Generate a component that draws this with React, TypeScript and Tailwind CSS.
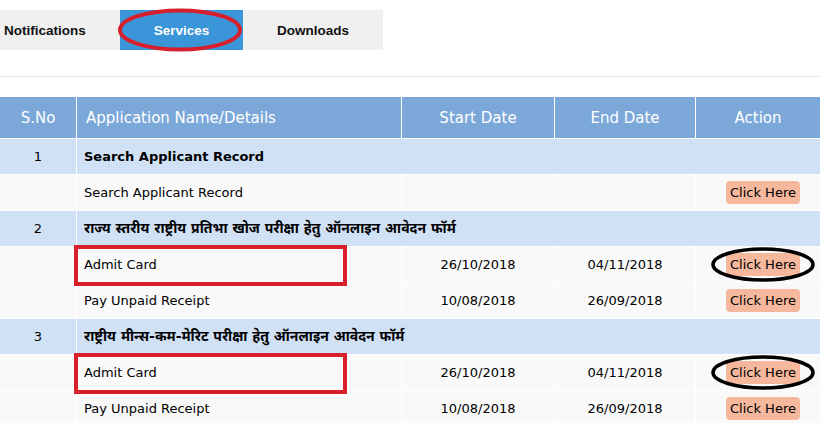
import React from 'react'

type Row =
  | { kind: 'group'; no: string; title: string; hindi?: boolean }
  | { kind: 'item'; name: string; start?: string; end?: string; mark?: boolean }

const rows: Row[] = [
  { kind: 'group', no: '1', title: 'Search Applicant Record' },
  { kind: 'item', name: 'Search Applicant Record' },
  { kind: 'group', no: '2', title: 'राज्य स्तरीय राष्ट्रीय प्रतिभा खोज परीक्षा हेतु ऑनलाइन आवेदन फॉर्म', hindi: true },
  { kind: 'item', name: 'Admit Card', start: '26/10/2018', end: '04/11/2018', mark: true },
  { kind: 'item', name: 'Pay Unpaid Receipt', start: '10/08/2018', end: '26/09/2018' },
  { kind: 'group', no: '3', title: 'राष्ट्रीय मीन्स-कम-मेरिट परीक्षा हेतु ऑनलाइन आवेदन फॉर्म', hindi: true },
  { kind: 'item', name: 'Admit Card', start: '26/10/2018', end: '04/11/2018', mark: true },
  { kind: 'item', name: 'Pay Unpaid Receipt', start: '10/08/2018', end: '26/09/2018' },
]

const cols = 'grid grid-cols-[77px_325px_153px_141px_124px]'

function ClickHere({ mark }: { mark?: boolean }) {
  return (
    <div className="relative ml-[10px]">
      <button className="bg-[#f5b89d] rounded-[4px] px-[4px] h-[23px] text-[13px] leading-[23px] text-black">
        Click Here
      </button>
      {mark && (
        <svg className="absolute left-[-16px] top-[-7px] w-[106px] h-[37px] pointer-events-none" viewBox="0 0 106 37">
          <ellipse cx="53" cy="18.5" rx="50" ry="15.5" fill="none" stroke="#000" strokeWidth="3.5" />
        </svg>
      )}
    </div>
  )
}

export default function App() {
  return (
    <div className="w-[820px] h-[423px] overflow-hidden bg-white font-['DejaVu_Sans',Verdana,'Noto_Sans',sans-serif]">
      {/* Tabs */}
      <div className="pt-[10px] h-[77px] border-b border-[#e8e8e8]">
        <div className="flex w-[383px] h-[40px] bg-[#f0f0f0] font-['Liberation_Sans',Arial,sans-serif] font-bold text-[13.5px]">
          <div className="w-[120px] flex items-center pt-[2px] pl-[4px] text-[#111]">Notifications</div>
          <div className="relative w-[123px] flex items-center justify-center pt-[2px] bg-[#3a95d9] text-white">
            Services
            <svg className="absolute left-[-3px] top-[-2px] w-[128px] h-[44px] pointer-events-none" viewBox="0 0 128 44">
              <ellipse cx="63" cy="22" rx="60" ry="19.5" fill="none" stroke="#d8202c" strokeWidth="4" />
            </svg>
          </div>
          <div className="w-[140px] flex items-center justify-center pt-[2px] text-[#111]">Downloads</div>
        </div>
      </div>

      {/* Table */}
      <div className="mt-[20px]">
        <div className={`${cols} h-[41px] bg-[#7ba7d9] text-white text-[15px]`}>
          <div className="flex items-center justify-center pt-[1px] border-r border-white">S.No</div>
          <div className="flex items-center pl-[9px] pt-[1px] border-r border-white">Application Name/Details</div>
          <div className="flex items-center justify-center pt-[1px] border-r border-white">Start Date</div>
          <div className="flex items-center justify-center pt-[1px] border-r border-white">End Date</div>
          <div className="flex items-center justify-center pt-[1px]">Action</div>
        </div>
        {rows.map((r, i) =>
          r.kind === 'group' ? (
            <div key={i} className={`${cols} h-[36px] bg-[#d0e1f5] border-t border-white text-[13px] text-black`}>
              <div className="flex items-center justify-center border-r border-white">{r.no}</div>
              <div className={`col-span-4 flex items-center pl-[7px] font-bold ${r.hindi ? 'text-[14px]' : ''}`}>
                {r.title}
              </div>
            </div>
          ) : (
            <div key={i} className={`${cols} h-[36px] bg-[#f9f9f9] border-t border-white text-[13px] text-black`}>
              <div className="border-r border-white" />
              <div className="relative flex items-center pl-[7px] border-r border-white">
                {r.name}
                {r.mark && (
                  <div className="absolute left-[-3px] top-[-2px] w-[273px] h-[41px] border-[4px] border-[#d8202c] pointer-events-none" />
                )}
              </div>
              <div className="flex items-center justify-center border-r border-white">{r.start}</div>
              <div className="flex items-center justify-center border-r border-white">{r.end}</div>
              <div className="flex items-center justify-center">
                <ClickHere mark={r.mark} />
              </div>
            </div>
          )
        )}
      </div>
    </div>
  )
}
